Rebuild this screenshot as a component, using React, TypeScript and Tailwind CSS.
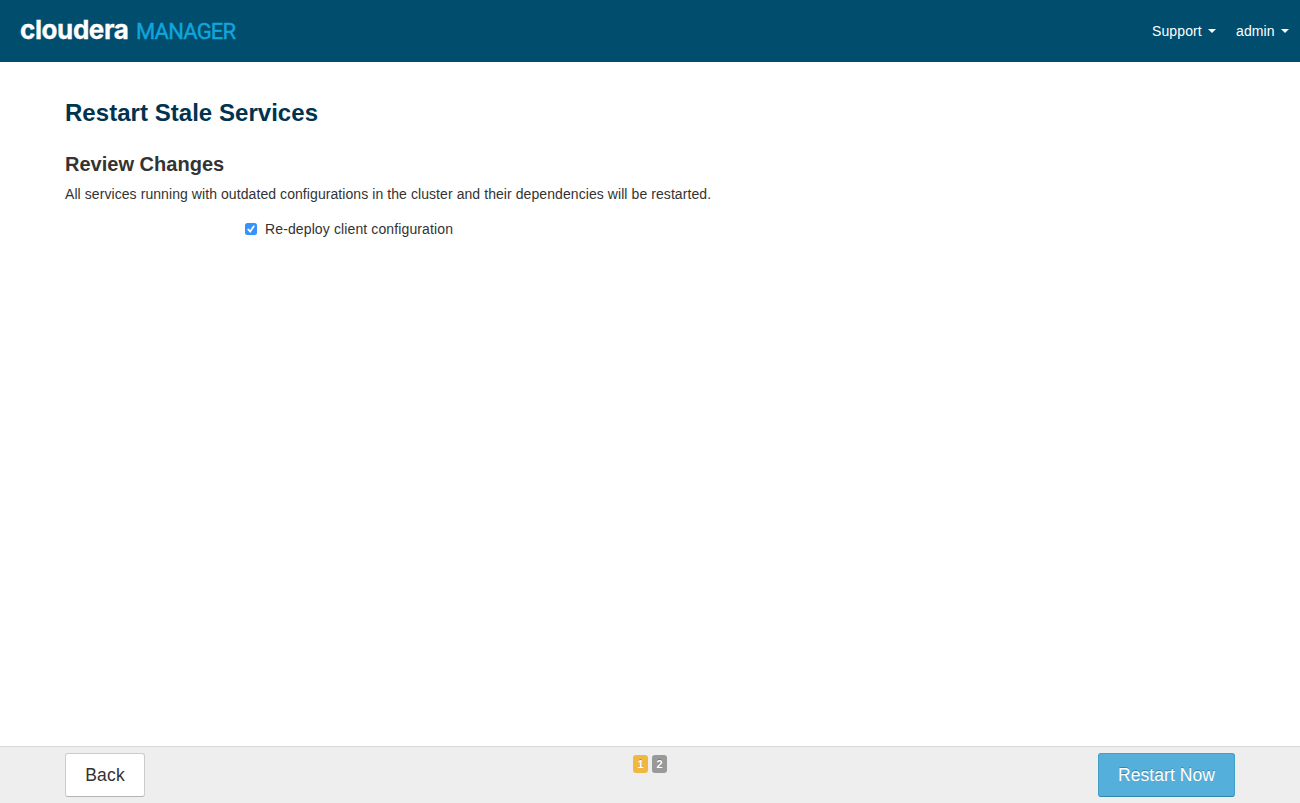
function Caret() {
  return (
    <svg width="8" height="4" viewBox="0 0 8 4" className="ml-1.5 fill-white" aria-hidden="true">
      <path d="M0 0h8L4 4z" />
    </svg>
  );
}

function NavItem({ label, className }: { label: string; className: string }) {
  return (
    <button type="button" className="flex items-center text-sm leading-5 tracking-[0.12px] text-white">
      <span className={className}>{label}</span>
      <Caret />
    </button>
  );
}

function Header() {
  return (
    <header className="flex h-[62px] shrink-0 items-start justify-between bg-[#004d6e] pr-[11px] pl-5">
      <div className="flex items-baseline whitespace-nowrap">
        <span className="w-[116px] font-['Inter',sans-serif] text-[26px] leading-[59px] font-bold tracking-[-0.4px] text-white [-webkit-text-stroke:0.3px_#fff]">
          cloudera
        </span>
        <span className="font-['Roboto',sans-serif] text-[22px] tracking-[-0.8px] text-[#10a5dc] [-webkit-text-stroke:0.4px_#10a5dc]">MANAGER</span>
      </div>
      <nav className="flex gap-5 pt-[21px]">
        <NavItem label="Support" className="w-[50px] text-left" />
        <NavItem label="admin" className="w-[39px] text-left" />
      </nav>
    </header>
  );
}

function Check() {
  return (
    <svg viewBox="0 0 12 12" className="size-3" fill="none" aria-hidden="true">
      <rect width="12" height="12" rx="2.5" fill="#3693fb" />
      <path d="M3.2 6.4 5.2 8.6 8.8 3.3" stroke="#fff" strokeWidth="1.7" strokeLinecap="round" />
    </svg>
  );
}

function Content() {
  return (
    <main className="grow px-[65px] pt-[31px] text-[#333]">
      <h1 className="text-2xl leading-10 font-bold tracking-[0.04px] text-[#003350]">Restart Stale Services</h1>
      <h2 className="mt-[11px] text-xl leading-10 font-bold tracking-[0.02px]">Review Changes</h2>
      <p className="text-sm leading-5 tracking-[0.075px]">
        All services running with outdated configurations in the cluster and their dependencies will be restarted.
      </p>
      <label className="mt-[15px] ml-[180px] flex w-fit items-center gap-2 text-sm leading-5 tracking-[0.12px]">
        <Check />
        <span>Re-deploy client configuration</span>
      </label>
    </main>
  );
}

function Footer() {
  return (
    <footer className="flex h-[57px] shrink-0 items-start justify-between border-t border-[#d9d9d9] bg-[#eeeeee] px-[65px] pt-1.5">
      <div className="flex flex-1">
        <button
          type="button"
          className="h-11 w-20 rounded-[3px] border border-[#ccc] border-b-[#b3b3b3] bg-white text-[17.5px] tracking-[0.2px] text-[#333]"
        >
          Back
        </button>
      </div>
      <div className="flex gap-1 pt-0.5 text-[11px] leading-[18px] font-bold text-white">
        <span className="h-[18px] w-[15px] rounded-[3px] bg-[#f0b840] text-center [text-shadow:0_-1px_0_rgba(0,0,0,0.25)]">1</span>
        <span className="h-[18px] w-[15px] rounded-[3px] bg-[#999] text-center [text-shadow:0_-1px_0_rgba(0,0,0,0.25)]">2</span>
      </div>
      <div className="flex flex-1 justify-end">
        <button
          type="button"
          className="h-11 w-[137px] rounded-[3px] border border-[#439fc8] border-b-[#3286ac] bg-[#54afdb] text-[17.5px] tracking-[0.05px] text-white [text-shadow:0_-1px_0_rgba(0,0,0,0.25)]"
        >
          Restart Now
        </button>
      </div>
    </footer>
  );
}

export default function App() {
  return (
    <div className="flex h-screen flex-col overflow-hidden bg-white font-['Liberation_Sans',Arial,sans-serif]">
      <Header />
      <Content />
      <Footer />
    </div>
  );
}
